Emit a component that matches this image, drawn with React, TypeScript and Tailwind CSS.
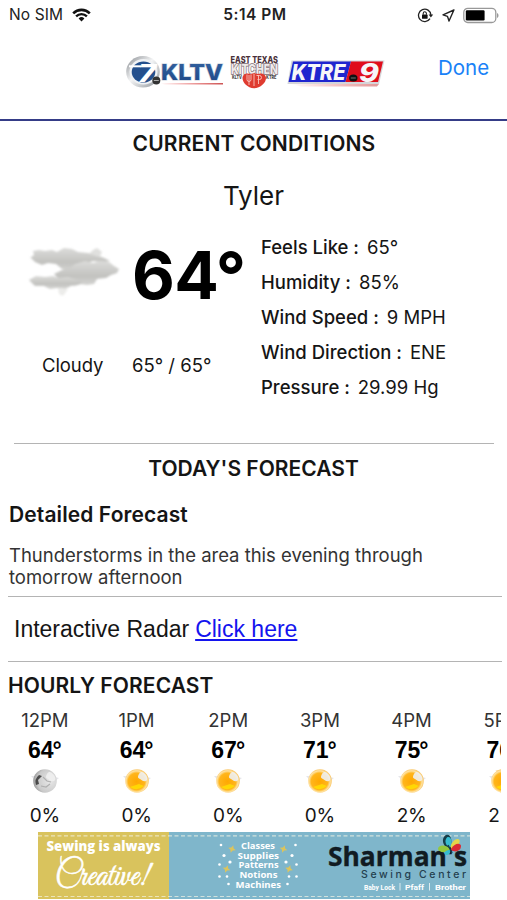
import type { ReactNode } from "react";

interface IHour {
  time: string;
  temp: string;
  rain: string;
  night?: boolean;
}

const details = [
  { label: "Feels Like :", value: "65°" },
  { label: "Humidity :", value: "85%" },
  { label: "Wind Speed :", value: "9 MPH" },
  { label: "Wind Direction :", value: "ENE" },
  { label: "Pressure :", value: "29.99 Hg" },
];

const hours: IHour[] = [
  { time: "12PM", temp: "64", rain: "0%", night: true },
  { time: "1PM", temp: "64", rain: "0%" },
  { time: "2PM", temp: "67", rain: "0%" },
  { time: "3PM", temp: "71", rain: "0%" },
  { time: "4PM", temp: "75", rain: "2%" },
  { time: "5PM", temp: "76", rain: "2%" },
];

const StatusBar = () => (
  <div className="flex h-[30px] items-center justify-between pl-[9px] pr-[8px] text-[#222]">
    <div className="flex w-[150px] items-center gap-[9px]">
      <span className="text-[15.5px] tracking-[0.1px]">No SIM</span>
      <svg width="19" height="14" viewBox="0 0 19 14" fill="none" stroke="#111">
        <path d="M1.2 5.3a11.8 11.8 0 0 1 16.6 0" strokeWidth="2.6" />
        <path d="M4.1 8.3a7.7 7.7 0 0 1 10.8 0" strokeWidth="2.4" />
        <path d="M9.5 13.5 6.6 10.5a4.1 4.1 0 0 1 5.8 0z" fill="#111" stroke="none" />
      </svg>
    </div>
    <span className="ml-[2px] text-[15.5px] font-semibold tracking-[0.5px]">5:14 PM</span>
    <div className="flex w-[150px] items-center justify-end">
      <svg width="17" height="15" viewBox="0 0 17 15" fill="none" stroke="#222" strokeWidth="1.3">
        <path d="M13 10.6A6.2 6.2 0 1 1 13.9 7" />
        <path d="M11.6 6.6h4.6l-2.3 3z" fill="#222" stroke="none" />
        <rect x="5" y="6.6" width="5.6" height="4.2" rx="0.6" fill="#111" stroke="none" />
        <path d="M6.2 6.8V5.4a1.6 1.6 0 0 1 3.2 0v1.4" strokeWidth="1.1" />
      </svg>
      <svg className="ml-[8px]" width="13" height="13" viewBox="0 0 13 13" fill="none" stroke="#222" strokeWidth="1.4" strokeLinejoin="round">
        <path d="M11.9 1 1 5.8l4.5 1.6 1.5 4.6z" />
      </svg>
      <svg className="ml-[8px]" width="36" height="17" viewBox="0 0 36 17">
        <rect x="0.8" y="1.3" width="32" height="14.2" rx="4" fill="#fff" stroke="#999" strokeWidth="1.3" />
        <rect x="2.8" y="3.3" width="18.8" height="10.2" rx="1.2" fill="#000" />
        <path d="M34 6v5c2-.8 2-4.2 0-5z" fill="#999" />
      </svg>
    </div>
  </div>
);

const StationLogos = () => (
  <svg width="262" height="40" viewBox="124 52 262 40">
    <defs>
      <linearGradient id="chrome" x1="0" y1="0" x2="1" y2="1">
        <stop offset="0" stopColor="#85898e" />
        <stop offset="0.45" stopColor="#f4f5f6" />
        <stop offset="1" stopColor="#8b9096" />
      </linearGradient>
      <linearGradient id="kltv" x1="0" y1="0" x2="0" y2="1">
        <stop offset="0" stopColor="#3362a0" />
        <stop offset="1" stopColor="#1d4787" />
      </linearGradient>
      <linearGradient id="fade" x1="0" y1="0" x2="1" y2="0">
        <stop offset="0" stopColor="#e33" stopOpacity="0" />
        <stop offset="1" stopColor="#c55" />
      </linearGradient>
    </defs>

    <ellipse cx="143" cy="71.8" rx="16.8" ry="15.7" fill="url(#chrome)" />
    <ellipse cx="143.5" cy="71.8" rx="14" ry="12.8" fill="#f0f2f4" />
    <ellipse cx="143.5" cy="72" rx="11.8" ry="10.6" fill="#24508d" />
    <path d="M129 66.3h12" stroke="#fff" strokeWidth="2" />
    <text x="138" y="81.5" fontSize="24" fontWeight="800" fontStyle="italic" fill="#fff" textLength="18" lengthAdjust="spacingAndGlyphs">7</text>
    <circle cx="156.3" cy="80.5" r="4" fill="#333" />
    <path d="M153.8 80.5h5" stroke="#aaa" strokeWidth="1" />
    <text x="161" y="80.3" fontSize="22" fontWeight="800" fill="url(#kltv)" stroke="#c8d0da" strokeWidth="1.2" paintOrder="stroke" textLength="62" lengthAdjust="spacingAndGlyphs">KLTV</text>
    <path d="M160 83h63v1.6h-59z" fill="url(#fade)" />

    <text x="230.5" y="63" fontSize="9.5" fontWeight="800" fill="#49303a" textLength="47.5" lengthAdjust="spacingAndGlyphs">EAST TEXAS</text>
    <text x="231" y="74.2" fontSize="12.6" fontWeight="800" fill="#eeeaea" stroke="#7d6a70" strokeWidth="1.4" paintOrder="stroke" textLength="47" lengthAdjust="spacingAndGlyphs">KITCHEN</text>
    <text x="232" y="79" fontSize="4.6" fontWeight="800" fill="#444" textLength="10" lengthAdjust="spacingAndGlyphs">KLTV</text>
    <text x="266" y="79" fontSize="4.6" fontWeight="800" fill="#444" textLength="10.5" lengthAdjust="spacingAndGlyphs">KTRE</text>
    <path d="M254 88.3c-6.5-.5-11.5-5.500-11.5-10.3 0-4 4.5-5.6 8-4 2-1 5.5-1 7.5 0 3-1.6 8 0 8 4 0 5-5.5 9.8-12 10.3z" fill="#df3b30" />
    <path d="M247 74.5v5q0 2 2 2t2-2v-5M249 75v10M254 74v12M258.5 84v-9M256.5 75.5h3q2 0 2 2t-2 2h-2" fill="none" stroke="#f8c5bd" strokeWidth="0.9" />

    <path d="M291.5 60.5h93l-5.5 23.5h-91.5z" fill="#d4d5d9" />
    <path d="M293 61.5h58l-5.5 20.6h-57z" fill="#1f25cf" />
    <path d="M351 61.5h32l-5 20.6h-32.5z" fill="#e00d1c" />
    <g fontStyle="italic" fontWeight="800" fill="#f6f6f8">
      <text x="291.5" y="80.3" fontSize="22" textLength="54" lengthAdjust="spacingAndGlyphs">KTRE</text>
      <text x="359" y="81.5" fontSize="26" textLength="20" lengthAdjust="spacingAndGlyphs">9</text>
    </g>
    <ellipse cx="353.3" cy="78" rx="4.2" ry="3.5" fill="#111" />
    <path d="M350.8 78h5" stroke="#777" strokeWidth="1" />
    <path d="M290 84h89l-2 2.6h-76z" fill="url(#fade)" opacity="0.6" />
  </svg>
);

const CloudIcon = () => (
  <svg width="96" height="56" viewBox="0 0 96 56">
    <defs>
      <filter id="soft" x="-20%" y="-20%" width="140%" height="140%">
        <feGaussianBlur stdDeviation="1.3" />
      </filter>
      <linearGradient id="cloud" x1="0" y1="0" x2="0" y2="1">
        <stop offset="0" stopColor="#dcdcda" />
        <stop offset="0.6" stopColor="#c2c2bf" />
        <stop offset="1" stopColor="#d6d6d4" />
      </linearGradient>
    </defs>
    <g filter="url(#soft)" fill="url(#cloud)">
      <path d="M65 17l-3-6 4-4 4-2 5 4-2 4 6 3 2 4z" fill="#e0e0de" />
      <path d="M3 15l4-3-1-4 6-1 6 1 7-1 5 2 7-4 8 1 6 3 10 1 8 3 8 2 6 3-8 1-9-1-9 3-8 5-7 3-7-3-6-5-8-1-6 2-7-3-4-4z" />
      <path d="M27 31l8-4 7-1 6-5 10-3 8 2 8-2 8 1 5 4 5 3-2 4-6 2-5 3-9 1-3 5-7 1-7-1-6 2-6-5-8-1z" />
      <path d="M2 37l7-4 9 1 8-1 6 2 9-1 10 3 5 3-5 2-7 1-6 3-8-1-7 1-6-3-9 0z" />
      <path d="M31 45l10 1-5 7-4-2z" fill="#ececea" />
    </g>
  </svg>
);

const HourIcon = ({ night }: { night?: boolean }) => (
  <svg width="32" height="28" viewBox="0 0 32 28">
    <defs>
      <radialGradient id="sun" cx="0.48" cy="0.52" r="0.52">
        <stop offset="0" stopColor="#ffa800" />
        <stop offset="0.68" stopColor="#ffb51c" />
        <stop offset="0.86" stopColor="#ffe2a0" />
        <stop offset="1" stopColor="#f9c667" />
      </radialGradient>
      <radialGradient id="moon" cx="0.7" cy="0.5" r="0.75">
        <stop offset="0" stopColor="#e8e8e8" />
        <stop offset="0.7" stopColor="#cacaca" />
        <stop offset="1" stopColor="#8a8a8a" />
      </radialGradient>
    </defs>
    <path d="M2 9l5 0-2 3zM26 10l4 1-4 3z" fill="#e6e6ea" />
    <circle cx="16" cy="14" r="11.8" fill={night ? "url(#moon)" : "url(#sun)"} />
    {night ? (
      <>
        <path d="M10 8q-5 4-3 10l3-1-1-4 4-4z" fill="#222" opacity="0.75" />
        <path d="M14 10l4 4 4 1M12 19l5 1 4-3" fill="none" stroke="#b0b0b0" strokeWidth="1.2" />
      </>
    ) : (
      <path d="M9 20q7 5 14-1l-5-2z" fill="#ffe100" opacity="0.8" />
    )}
    <path d="M18 7c2-3 4-2 6 0 3 3 3 6 1 7-3 1-4-1-6-2-3-1-2-3-1-5z" fill="#f0eff0" opacity="0.9" />
  </svg>
);

const Star = ({ x, y }: { x: number; y: number }) => (
  <path d="M0-4 1.2-1.2 4 0 1.2 1.2 0 4-1.2 1.2-4 0-1.2-1.2z" transform={`translate(${x} ${y}) rotate(20)`} fill="#dcc45c" />
);

const AdBanner = () => (
  <svg className="ml-[38px] block" width="432" height="67" viewBox="38 832 432 67">
    <rect x="38" y="832" width="131" height="67" fill="#d9c35d" />
    <rect x="169" y="832" width="301" height="67" fill="#7fb6cb" />
    <path d="M38 835.8h432M38 896.5h432" stroke="#f4f3e4" strokeOpacity="0.7" strokeWidth="1.2" strokeDasharray="4 2.5" />

    <text x="46.5" y="850.5" fontFamily="Open Sans, sans-serif" fontSize="13.5" fontWeight="800" fill="#fff" textLength="114" lengthAdjust="spacingAndGlyphs">Sewing is always</text>
    <text x="55" y="885" fontFamily="Great Vibes, Liberation Serif, serif" fontSize="36" fill="#fff" stroke="#fff" strokeWidth="0.5" textLength="94" lengthAdjust="spacingAndGlyphs">Creative!</text>

    <g fontFamily="Open Sans, sans-serif" fontSize="9.5" fontWeight="700" fill="#fff">
      <text x="241" y="848.5" textLength="34" lengthAdjust="spacingAndGlyphs">Classes</text>
      <text x="237.5" y="858.5" textLength="41.5" lengthAdjust="spacingAndGlyphs">Supplies</text>
      <text x="238.5" y="868" textLength="40" lengthAdjust="spacingAndGlyphs">Patterns</text>
      <text x="239.5" y="878" textLength="38" lengthAdjust="spacingAndGlyphs">Notions</text>
      <text x="235.5" y="887.5" textLength="45.5" lengthAdjust="spacingAndGlyphs">Machines</text>
    </g>
    <g fill="#fff">
      <circle cx="221" cy="845" r="1.3" />
      <circle cx="224" cy="855.5" r="1.6" />
      <circle cx="230" cy="862" r="1.6" />
      <circle cx="219.5" cy="864.5" r="1.3" />
      <circle cx="219.5" cy="876.5" r="1.3" />
      <circle cx="227" cy="876.5" r="1.3" />
      <circle cx="228.5" cy="884" r="1.3" />
      <circle cx="295.5" cy="845" r="1.3" />
      <circle cx="292" cy="855.5" r="1.6" />
      <circle cx="286" cy="862" r="1.6" />
      <circle cx="296.5" cy="864.5" r="1.3" />
      <circle cx="289" cy="876.5" r="1.3" />
      <circle cx="296.5" cy="876.5" r="1.3" />
      <circle cx="287.5" cy="884" r="1.3" />
    </g>
    <Star x={232} y={849} />
    <Star x={226.5} y={869} />
    <Star x={283.5} y={849} />
    <Star x={289} y={869} />

    <text x="328" y="866" fontFamily="Open Sans, sans-serif" fontSize="27.5" fontWeight="700" fill="#111b22" stroke="#111b22" strokeWidth="0.4" textLength="139" lengthAdjust="spacingAndGlyphs">Sharman's</text>
    <text x="361" y="877.8" fontFamily="Inter, sans-serif" fontSize="10.5" fontWeight="500" fill="#24404f" textLength="105">Sewing Center</text>
    <g fontFamily="Roboto, sans-serif" fontSize="8" fontWeight="700" fill="#fff">
      <text x="364" y="889.8" textLength="31" lengthAdjust="spacingAndGlyphs">Baby Lock</text>
      <text x="405" y="889.8" textLength="19" lengthAdjust="spacingAndGlyphs">Pfaff</text>
      <text x="435" y="889.8" textLength="31" lengthAdjust="spacingAndGlyphs">Brother</text>
      <path d="M400 883v7.5M429.5 883v7.5" stroke="#e6f0f4" strokeWidth="0.9" />
    </g>
    <path d="M449 849c-7-3-8-11-3-14 5-2 7 7 4 13z" fill="#173e49" />
    <path d="M449.5 847c-5-2-5-8-2-10 4-1 5 5 3 10z" fill="#36bcd0" />
    <path d="M450 849c-5-5-12-4-12 0 1 4 8 4 12 1z" fill="#93c83e" />
    <path d="M449 850c-4 0-6 4-3 5 3 0 5-2 4-5z" fill="#36bcd0" />
    <path d="M450.5 847c1-6 7-10 9-7 1 4-3 7-8 9z" fill="#e2d84a" />
    <path d="M451 849c4-7 10-6 10-3 0 5-6 7-10 4z" fill="#d92c35" />
    <path d="M448 845l4 8" stroke="#173e49" strokeWidth="1.4" />
  </svg>
);

const Heading = ({ children }: { children: ReactNode }) => (
  <h2 className="text-center text-[21px] font-semibold leading-[26px]">{children}</h2>
);

const App = () => {
  return (
    <div className="h-[900px] w-[507px] overflow-hidden bg-white font-['Inter',sans-serif] text-[#151515]">
      <StatusBar />

      <header className="flex h-[91px] items-start border-b-2 border-[#353c87] pt-[22px]">
        <div className="ml-[124px]">
          <StationLogos />
        </div>
        <button className="ml-[52px] mt-[3px] text-[20.5px] leading-[26px] text-[#1a82f7]">Done</button>
      </header>

      <section className="pt-[10px]">
        <div className="pl-px tracking-[0.15px]">
          <Heading>CURRENT CONDITIONS</Heading>
        </div>
        <p className="mt-[21px] text-center text-[26px] leading-[36px]">Tyler</p>

        <div className="flex h-[229px] pt-[16px]">
          <div className="w-[261px]">
            <div className="flex h-[94px] items-start">
              <div className="ml-[27px] mt-[13px] w-[105px]">
                <CloudIcon />
              </div>
              <span className="mt-[5px] text-[66px] font-bold leading-[80px] tracking-[-0.7px] text-black">64°</span>
            </div>
            <div className="mt-[29px] flex text-[18.5px] leading-[24px]">
              <span className="ml-[42px] w-[90px] tracking-[-0.1px]">Cloudy</span>
              <span>65° / 65°</span>
            </div>
          </div>
          <ul className="text-[18.5px] leading-[35px]">
            {details.map((item) => (
              <li key={item.label}>
                <span className="mr-[8px] font-medium">{item.label}</span>
                {item.value}
              </li>
            ))}
          </ul>
        </div>
      </section>

      <section>
        <hr className="ml-[14px] w-[480px] border-t-[1.5px] border-[#b4b4b4]" />
        <div className="mt-[12px]">
          <Heading>TODAY'S FORECAST</Heading>
        </div>
        <h3 className="ml-[9px] mt-[20px] text-[21px] font-semibold leading-[26px] tracking-[0.1px]">Detailed Forecast</h3>
        <p className="ml-[9px] mt-[16px] w-[440px] text-[18.5px] leading-[22px] tracking-[-0.02px] text-[#333]">
          Thunderstorms in the area this evening through tomorrow afternoon
        </p>
        <hr className="ml-[8px] mt-[8px] w-[494px] border-[#b4b4b4]" />
        <p className="ml-[14px] flex h-[64px] items-center gap-[6px] font-['Liberation_Sans',sans-serif] text-[23px]">
          Interactive Radar
          <a href="#" className="text-[#1414ee] underline">Click here</a>
        </p>
        <hr className="ml-[8px] w-[494px] border-[#b4b4b4]" />
      </section>

      <section className="pt-[11px]">
        <h2 className="ml-[8px] text-[21px] font-semibold leading-[26px] tracking-[0.1px]">HOURLY FORECAST</h2>
        <div className="flex h-[133px] w-[501px] overflow-hidden pt-[9px]">
          {hours.map((hour) => (
            <div key={hour.time} className="-ml-px mr-px flex w-[91.7px] shrink-0 flex-col items-center">
              <span className="text-[18.5px] leading-[24px] text-[#333]">{hour.time}</span>
              <span className="mt-[5px] font-['Liberation_Sans',sans-serif] text-[23px] font-bold leading-[26px] text-black">
                {hour.temp}<span className="-ml-px">°</span>
              </span>
              <div className="mt-[4px]">
                <HourIcon night={hour.night} />
              </div>
              <span className="mt-[8px] text-[19px] leading-[26px] tracking-[-0.2px]">{hour.rain}</span>
            </div>
          ))}
        </div>
        <AdBanner />
      </section>
    </div>
  );
};

export default App;
